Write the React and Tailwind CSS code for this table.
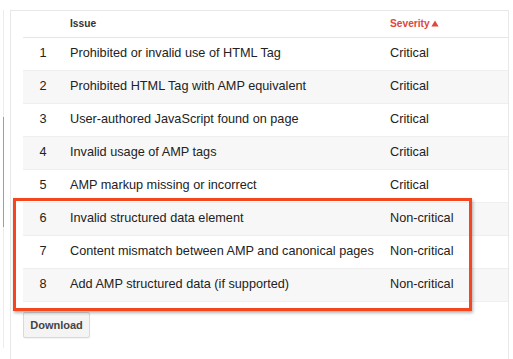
const issues = [
  { id: 1, issue: 'Prohibited or invalid use of HTML Tag', severity: 'Critical' },
  { id: 2, issue: 'Prohibited HTML Tag with AMP equivalent', severity: 'Critical' },
  { id: 3, issue: 'User-authored JavaScript found on page', severity: 'Critical' },
  { id: 4, issue: 'Invalid usage of AMP tags', severity: 'Critical' },
  { id: 5, issue: 'AMP markup missing or incorrect', severity: 'Critical' },
  { id: 6, issue: 'Invalid structured data element', severity: 'Non-critical' },
  { id: 7, issue: 'Content mismatch between AMP and canonical pages', severity: 'Non-critical' },
  { id: 8, issue: 'Add AMP structured data (if supported)', severity: 'Non-critical' },
];

const App = () => {
  return (
    <div
      className="flex h-[359px] w-[513px] overflow-hidden bg-white pt-[10px] text-[#222]"
      style={{ fontFamily: '"Liberation Sans", Arial, sans-serif' }}
    >
      {/* scroll strip on the far left */}
      <div className="ml-[3px] flex h-[338px] w-px flex-col bg-[#ececec]">
        <div className="h-[107px]" />
        <div className="h-[110px] bg-[#9e9e9e]" />
      </div>

      <div className="relative ml-[6px] h-[360px] w-[499px] border-l border-r border-t border-[#e8e8e8] pl-[12px]">
        <div className="flex h-[27px] items-center border-b border-[#e6e6e6] text-[10.2px] font-bold">
          <div className="w-[39px] shrink-0" />
          <div className="w-[320px] shrink-0 pl-[8px] text-[#333]">Issue</div>
          <div className="flex items-center pl-[8px] text-[#e0463a]">
            Severity
            <svg width="8" height="7" viewBox="0 0 8 7" className="ml-[1px]">
              <path d="M4 0.5 L7.6 6.5 L0.4 6.5 Z" fill="#e0463a" />
            </svg>
          </div>
        </div>

        {issues.map((row) => (
          <div
            key={row.id}
            className={`flex h-[33px] items-center whitespace-nowrap border-b border-[#efefef] text-[12.7px] ${
              row.id % 2 === 0 ? 'bg-[#f7f7f7]' : 'bg-white'
            }`}
          >
            <div className="w-[40px] shrink-0 text-center">{row.id}</div>
            <div className="w-[319px] shrink-0 pl-[7px]">{row.issue}</div>
            <div className="pl-[8px]">{row.severity}</div>
          </div>
        ))}

        <button
          type="button"
          className="mt-[10px] h-[26px] w-[67px] rounded-[2px] border border-[#d9d9d9] bg-[#f4f4f4] text-[11px] font-bold text-[#444] shadow-[0_1px_1px_rgba(0,0,0,0.05)]"
        >
          Download
        </button>

        {/* highlight annotation */}
        <div className="pointer-events-none absolute left-[2px] top-[187px] h-[113px] w-[459px] border-[3px] border-[#f4461f] shadow-[1px_2px_3px_rgba(0,0,0,0.3)]" />
      </div>
    </div>
  );
};

export default App;
